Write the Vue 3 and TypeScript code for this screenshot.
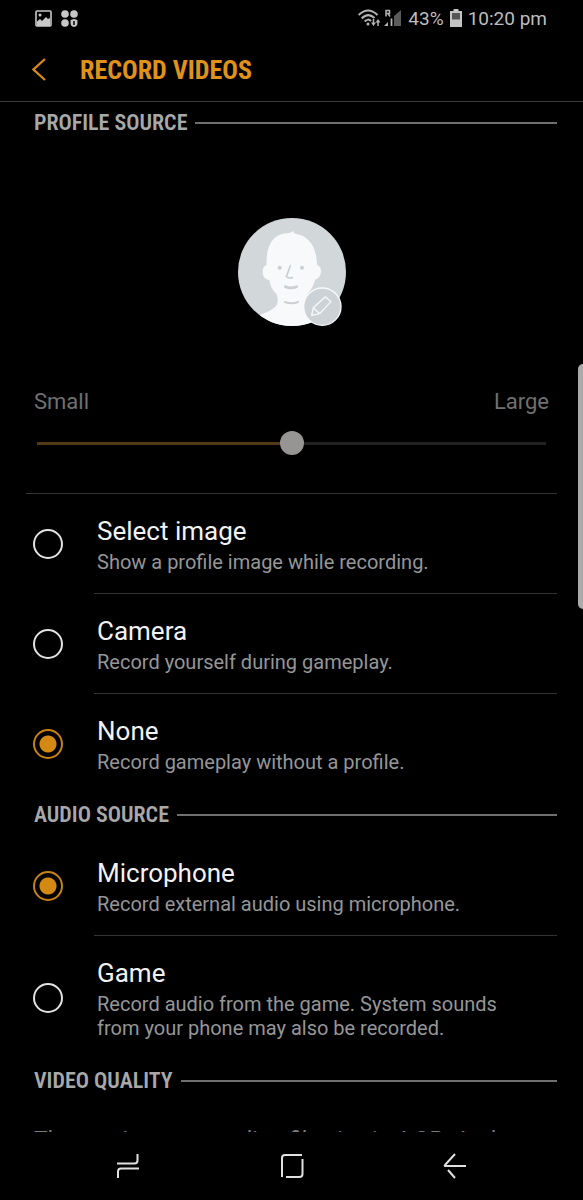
<script setup lang="ts">
import { computed, ref } from 'vue'

interface Option {
  value: string
  title: string
  detail: string
}

const profileOptions: Option[] = [
  { value: 'image', title: 'Select image', detail: 'Show a profile image while recording.' },
  { value: 'camera', title: 'Camera', detail: 'Record yourself during gameplay.' },
  { value: 'none', title: 'None', detail: 'Record gameplay without a profile.' },
]

const audioOptions: Option[] = [
  { value: 'mic', title: 'Microphone', detail: 'Record external audio using microphone.' },
  {
    value: 'game',
    title: 'Game',
    detail: 'Record audio from the game. System sounds from your phone may also be recorded.',
  },
]

const profile = ref('none')
const audio = ref('mic')
const size = ref(50)
const fill = computed(() => ({ '--fill': `${size.value}%` }))
</script>

<template>
  <div class="screen">
    <div class="status">
      <div class="status-group">
        <svg class="notice" width="17" height="17" viewBox="0 0 17 17" aria-hidden="true">
          <rect x="1" y="1" width="15" height="15" rx="1" fill="none" stroke="#c8c8c8" stroke-width="1.6" />
          <circle cx="5" cy="5" r="1.5" fill="#c8c8c8" />
          <path d="M2 11.500 5 9l2 2 4-4 2 2 2-1v8H2z" fill="#c8c8c8" />
        </svg>
        <svg class="notice" width="17" height="17" viewBox="0 0 17 17" aria-hidden="true">
          <g fill="#c8c8c8">
            <circle cx="4" cy="4" r="3.8" />
            <circle cx="13" cy="4" r="3.8" />
            <circle cx="4" cy="13" r="3.8" />
            <path d="M9.6 10 13 9l3.400 1v3.500q0 2.500-3.400 3.500-3.400-1-3.400-3.500z" />
          </g>
          <path d="M13 11v4" stroke="#000" stroke-width="1.500" />
        </svg>
      </div>
      <div class="status-group right">
        <svg width="44" height="18" viewBox="0 0 44 18" aria-hidden="true">
          <g fill="none" stroke="#b4b4b4" stroke-width="2">
            <path d="M.7 6Q10-3 19.500 6" />
            <path d="M3.700 9.500Q10 3 16.500 9" />
            <path d="M6.700 12.500Q10 9 13 12" />
          </g>
          <circle cx="10" cy="15" r="1.500" fill="#b4b4b4" />
          <path d="M15.500 10v5M20 17v-5" stroke="#b4b4b4" stroke-width="1.500" />
          <path d="M13 13.500h5l-2.500 3.500zM17.500 13.500h5L20 10z" fill="#b4b4b4" />
          <path d="M28 7.500V1.500h3.500v3H28M30 4.500l2 3" fill="none" stroke="#b4b4b4" stroke-width="1.500" />
          <path d="m26 17 4-4v4z" fill="#b4b4b4" />
          <path d="M33.500 9.500V17" stroke="#b4b4b4" stroke-width="1.800" />
          <path d="m36 7 7-6v16h-7z" fill="#5b5b5b" />
        </svg>
        <span>43%</span>
        <svg width="12" height="18" viewBox="0 0 12 18" aria-hidden="true">
          <path d="M3.500 0h5v2H12v16H0V2h3.500z" fill="#c4c4c4" />
          <path d="M2 4h8v6.500H2z" fill="#555" />
        </svg>
        <span>10:20 pm</span>
      </div>
    </div>

    <header class="header">
      <button class="back" type="button" aria-label="Back">
        <svg width="15" height="23" viewBox="0 0 15 23" aria-hidden="true">
          <path d="M13 1 1.500 11.500 13 22" fill="none" stroke="#d98a14" stroke-width="2.300" />
        </svg>
      </button>
      <h1>RECORD VIDEOS</h1>
    </header>

    <main class="content">
      <h2 class="section">PROFILE SOURCE</h2>

      <button class="avatar" type="button" aria-label="Edit profile image">
        <svg width="108" height="109" viewBox="53 55 324 327" aria-hidden="true">
          <defs>
            <clipPath id="face"><circle cx="215" cy="217" r="162" /></clipPath>
          </defs>
          <circle cx="215" cy="217" r="162" fill="#d2d7da" />
          <g clip-path="url(#face)">
            <path
              d="M139 196C136 132 163 101 202 101Q213 99 219 93 218 99 225 102C266 108 289 141 290 196Q303 200 302 218 299 237 284 240 280 261 262 282L258 312Q265 330 310 342V382H90L108 350Q159 331 168 318 176 307 169 284 150 266 147 241 127 238 127 217 127 198 139 196Z"
              fill="#f7f9fb"
            />
            <g fill="none" stroke="#c9cfd3" stroke-linecap="round">
              <path d="M210 198 198 231Q205 237 216 234" stroke-width="5" />
              <path d="M195 261Q212 268 229 261" stroke-width="8" />
              <path d="M194 307Q214 315 233 307" stroke-width="6" />
            </g>
            <circle cx="178" cy="204" r="6" fill="#c9cfd3" />
            <circle cx="245" cy="204" r="6" fill="#c9cfd3" />
          </g>
          <circle cx="306" cy="321" r="56" fill="#cdd2d6" stroke="#f7f9fb" stroke-width="4" />
          <g fill="none" stroke="#f7f9fb" stroke-width="4" stroke-linejoin="round">
            <path d="m274 347 5-23 36-33 17 15-34 36z" />
            <path d="m279 324 19 18" />
          </g>
        </svg>
      </button>

      <div class="sizer">
        <div class="sizer-labels">
          <label for="size">Small</label>
          <span>Large</span>
        </div>
        <input id="size" v-model.number="size" class="slider" type="range" min="0" max="100" :style="fill" />
      </div>

      <div class="options" role="radiogroup" aria-label="Profile source">
        <label v-for="o in profileOptions" :key="o.value" class="option">
          <input v-model="profile" type="radio" name="profile" :value="o.value" />
          <span class="option-text">
            <span class="title">{{ o.title }}</span>
            <span class="detail">{{ o.detail }}</span>
          </span>
        </label>
      </div>

      <h2 class="section">AUDIO SOURCE</h2>
      <div class="options" role="radiogroup" aria-label="Audio source">
        <label v-for="o in audioOptions" :key="o.value" class="option">
          <input v-model="audio" type="radio" name="audio" :value="o.value" />
          <span class="option-text">
            <span class="title">{{ o.title }}</span>
            <span class="detail">{{ o.detail }}</span>
          </span>
        </label>
      </div>

      <h2 class="section">VIDEO QUALITY</h2>
      <p class="note">The maximum recording file size is 4 GB. And</p>
    </main>

    <nav class="nav">
      <button type="button" aria-label="Recent apps">
        <svg width="24" height="26" viewBox="0 0 24 26" aria-hidden="true">
          <path d="M1 10.500h17.500q3 0 3-3V1M2 25v-6.500q0-3 3-3h18" fill="none" stroke="#e0e0e0" stroke-width="2" />
        </svg>
      </button>
      <button type="button" aria-label="Home">
        <svg width="24" height="26" viewBox="0 0 24 26" aria-hidden="true">
          <path d="M2 24V5q0-3 3-3h17M22.500 6v15q0 3-3 3H6" fill="none" stroke="#e0e0e0" stroke-width="2" />
        </svg>
      </button>
      <button type="button" aria-label="Back">
        <svg width="24" height="26" viewBox="0 0 24 26" aria-hidden="true">
          <path d="M12 1 2 12q-1 1 1 1h20M5 17l7 8" fill="none" stroke="#e0e0e0" stroke-width="2" />
        </svg>
      </button>
    </nav>

    <div class="edge-handle"></div>
  </div>
</template>

<style>
body {
  background: #000;
}
</style>

<style scoped>
.screen {
  position: relative;
  display: flex;
  flex-direction: column;
  height: 100vh;
  overflow: hidden;
  background: #000;
  color: #f2f2f2;
  font-family: Roboto, "Noto Sans", sans-serif;
}

.screen * {
  box-sizing: border-box;
}

button {
  padding: 0;
  border: 0;
  background: none;
}

svg {
  display: block;
}

.status {
  display: flex;
  flex: none;
  justify-content: space-between;
  height: 36px;
  padding: 0 36px 0 35px;
}

.status-group {
  display: flex;
  align-items: center;
  gap: 9px;
}

.right {
  gap: 6px;
  color: #bdbdbd;
  font-size: 19px;
}

.header {
  display: flex;
  flex: none;
  align-items: center;
  gap: 33px;
  height: 66px;
  padding: 2px 32px 0;
  border-bottom: 1px solid #3c3c3c;
}

h1,
h2 {
  margin: 0;
  font-family: "Roboto Condensed", "Liberation Sans Narrow", Roboto, sans-serif;
  font-weight: 700;
}

h1 {
  color: #e0911a;
  font-size: 26px;
  line-height: 32px;
}

.content {
  flex: 1;
  min-height: 0;
  overflow: hidden;
}

.section {
  display: flex;
  align-items: center;
  gap: 8px;
  height: 42px;
  padding: 0 26px 0 34px;
  color: #a8a8a8;
  font-size: 22px;
  font-weight: 600;
  line-height: 28px;
}

.section::after {
  flex: 1;
  height: 2px;
  background: #707070;
  content: "";
}

.avatar {
  display: block;
  margin: 74px auto 60px;
}

.sizer {
  margin: 0 26px;
  padding-bottom: 38px;
  border-bottom: 1px solid #333;
}

.sizer-labels {
  display: flex;
  justify-content: space-between;
  padding: 0 8px;
  color: #707070;
  font-size: 22px;
  line-height: 30px;
}

.slider {
  display: block;
  width: calc(100% - 22px);
  height: 24px;
  margin: 14px 11px 0;
  appearance: none;
  background: linear-gradient(to right, #523a19 var(--fill), #222 var(--fill)) center / 100% 3px no-repeat;
}

.slider::-webkit-slider-thumb {
  width: 24px;
  height: 24px;
  border-radius: 50%;
  appearance: none;
  background: #979594;
}

.option {
  display: flex;
  align-items: center;
  gap: 31px;
  padding-left: 33px;
}

.option input {
  flex: none;
  width: 30px;
  height: 30px;
  margin: 0;
  border: 2px solid #e2e2e2;
  border-radius: 50%;
  appearance: none;
}

.option input:checked {
  border-color: #c98213;
  background: radial-gradient(circle, #d48a12 8px, transparent 9px);
}

.option-text {
  display: flex;
  flex: 1;
  flex-direction: column;
  gap: 1px;
  margin-right: 26px;
  padding: 19px 40px 19px 3px;
  border-bottom: 1px solid #333;
}

.option:last-child .option-text {
  border-bottom-color: transparent;
}

.title {
  font-size: 26px;
  line-height: 36px;
}

.detail {
  color: #969696;
  font-size: 20px;
  line-height: 24px;
}

.note {
  margin: 24px 26px 0 34px;
  color: #7c7c7c;
  font-size: 23px;
  line-height: 30px;
}

.nav {
  display: flex;
  flex: none;
  justify-content: space-between;
  height: 68px;
  padding: 0 116px;
}

.edge-handle {
  position: absolute;
  top: 364px;
  right: 0;
  width: 5px;
  height: 245px;
  border-radius: 5px 0 0 5px;
  background: #aaa;
}
</style>
